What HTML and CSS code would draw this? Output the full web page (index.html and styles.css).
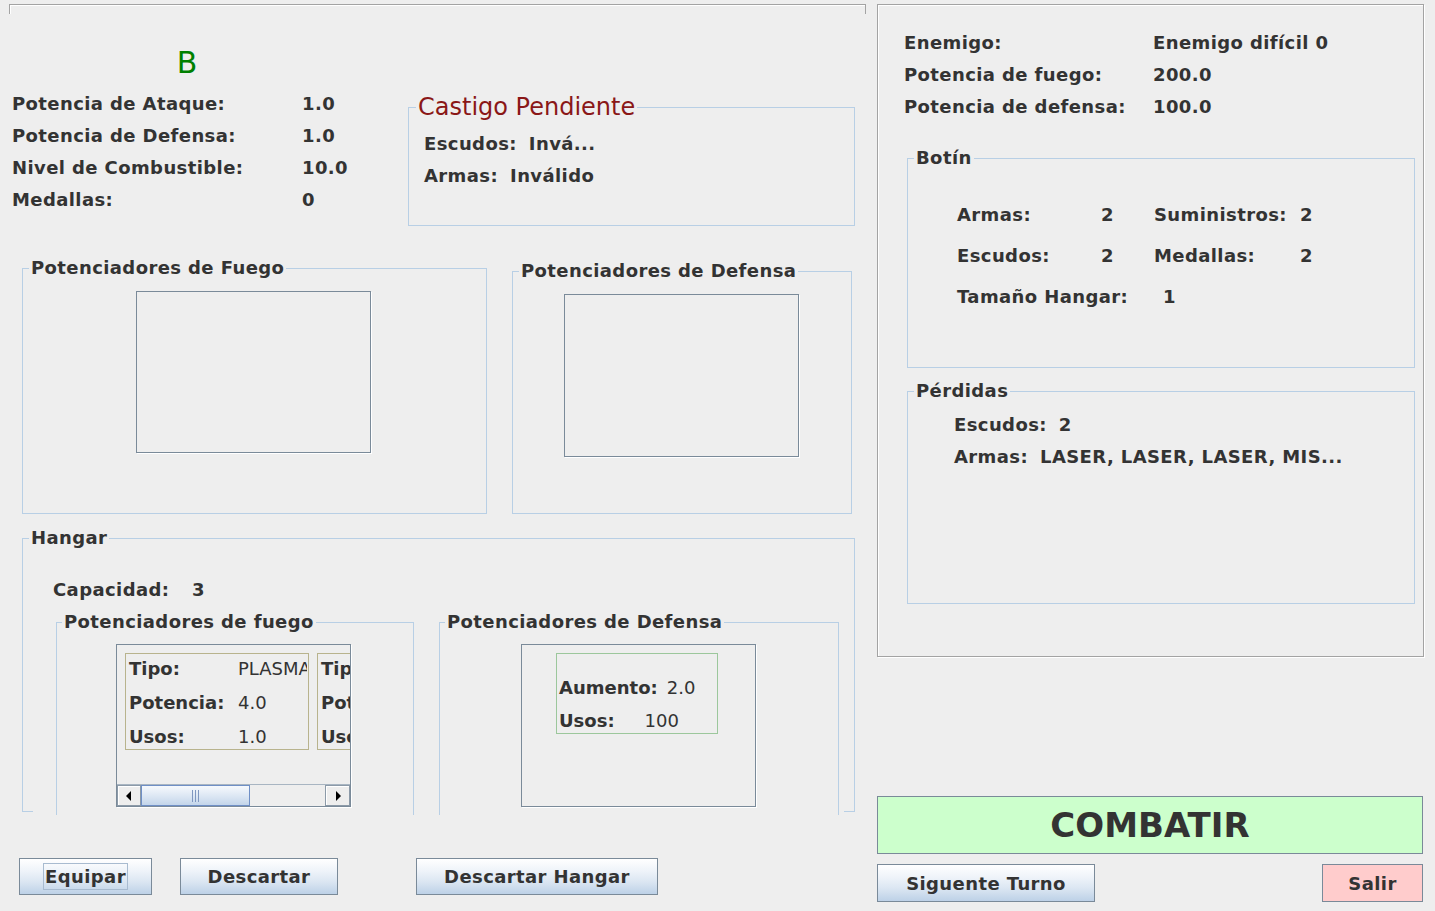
FILE: index.html
```html
<!DOCTYPE html>
<html lang="es">
<head>
<meta charset="utf-8">
<title>Partida</title>
<link rel="stylesheet" href="styles.css">
</head>
<body>
<div class="app">
  <div class="left">
    <div class="strip"></div>

    <div class="header">
      <div class="player">
        <div class="name">B</div>
        <div class="stats">
          <span>Potencia de Ataque:</span><span>1.0</span>
          <span>Potencia de Defensa:</span><span>1.0</span>
          <span>Nivel de Combustible:</span><span>10.0</span>
          <span>Medallas:</span><span>0</span>
        </div>
      </div>
      <fieldset class="box castigo">
        <legend>Castigo Pendiente</legend>
        <div class="castigo-body">
          <div class="pair"><span>Escudos:</span><span>Invá...</span></div>
          <div class="pair"><span>Armas:</span><span>Inválido</span></div>
        </div>
      </fieldset>
    </div>

    <div class="boosters">
      <fieldset class="box fire">
        <legend>Potenciadores de Fuego</legend>
        <div class="list-empty fire-list"></div>
      </fieldset>
      <fieldset class="box def">
        <legend>Potenciadores de Defensa</legend>
        <div class="list-empty def-list"></div>
      </fieldset>
    </div>

    <fieldset class="box hangar">
      <legend>Hangar</legend>
      <div class="hangar-body">
        <div class="cap"><span class="cap-label">Capacidad:</span><span>3</span></div>
        <div class="hangar-row">
          <fieldset class="box h-fire">
            <legend>Potenciadores de fuego</legend>
            <div class="scroll">
              <div class="viewport">
                <div class="card weapon">
                  <span class="lbl">Tipo:</span><span class="val">PLASMA</span>
                  <span class="lbl">Potencia:</span><span class="val">4.0</span>
                  <span class="lbl">Usos:</span><span class="val">1.0</span>
                </div>
                <div class="card weapon">
                  <span class="lbl">Tipo:</span><span class="val">LASER</span>
                  <span class="lbl">Potencia:</span><span class="val">2.0</span>
                  <span class="lbl">Usos:</span><span class="val">1.0</span>
                </div>
              </div>
              <div class="hbar">
                <div class="arrow arrow-left"></div>
                <div class="thumb"><span class="grip"></span></div>
                <div class="track"></div>
                <div class="arrow arrow-right"></div>
              </div>
            </div>
          </fieldset>
          <fieldset class="box h-def">
            <legend>Potenciadores de Defensa</legend>
            <div class="pane">
              <div class="card shield">
                <div class="srow"><span class="lbl">Aumento:</span><span class="val v-a">2.0</span></div>
                <div class="srow"><span class="lbl">Usos:</span><span class="val v-b">100</span></div>
              </div>
            </div>
          </fieldset>
        </div>
      </div>
    </fieldset>

    <div class="actions">
      <button class="btn equip"><span class="focus">Equipar</span></button>
      <button class="btn discard">Descartar</button>
      <button class="btn discard-hangar">Descartar Hangar</button>
    </div>
  </div>

  <div class="right">
    <div class="enemy-panel">
      <div class="enemy">
        <span>Enemigo:</span><span>Enemigo difícil 0</span>
        <span>Potencia de fuego:</span><span>200.0</span>
        <span>Potencia de defensa:</span><span>100.0</span>
      </div>
      <fieldset class="box botin">
        <legend>Botín</legend>
        <div class="loot">
          <span>Armas:</span><span>2</span><span>Suministros:</span><span>2</span>
          <span>Escudos:</span><span>2</span><span>Medallas:</span><span>2</span>
          <span class="span2">Tamaño Hangar:</span><span class="hval">1</span>
        </div>
      </fieldset>
      <fieldset class="box perdidas">
        <legend>Pérdidas</legend>
        <div class="perdidas-body">
          <div class="pair"><span>Escudos:</span><span>2</span></div>
          <div class="pair"><span>Armas:</span><span>LASER, LASER, LASER, MIS...</span></div>
        </div>
      </fieldset>
    </div>
    <button class="combat">COMBATIR</button>
    <div class="turn-row">
      <button class="btn next">Siguente Turno</button>
      <button class="btn quit">Salir</button>
    </div>
  </div>
</div>
</body>
</html>
```
FILE: styles.css
```css
* { box-sizing: border-box; }

html, body {
  margin: 0;
  padding: 0;
  background: #eeeeee;
}

body {
  width: 1435px;
  height: 911px;
  overflow: hidden;
  font-family: "DejaVu Sans", "Liberation Sans", sans-serif;
  font-weight: bold;
  font-size: 18px;
  letter-spacing: 0.4px;
  color: #333333;
}

.app {
  display: flex;
  align-items: flex-start;
}

/* ---------- generic titled box (Swing TitledBorder) ---------- */
.box {
  margin: 0;
  padding: 0;
  min-width: 0;
  border: 1px solid #b8cfe5;
}

.box > legend {
  padding: 0 2px;
  margin-left: 6px;
  line-height: 20px;
  white-space: nowrap;
}

/* ---------- left column ---------- */
.left {
  width: 877px;
  display: flex;
  flex-direction: column;
}

.strip {
  margin: 4px 0 0 9px;
  width: 857px;
  height: 10px;
  border: 1px solid #a3a3a3;
  border-bottom: none;
  box-shadow: inset 1px 1px 0 #ffffff;
}

.header {
  display: flex;
  align-items: flex-start;
  height: 244px;
}

.player {
  margin-left: 12px;
  width: 350px;
  padding-top: 31px;
}

.name {
  text-align: center;
  font-weight: normal;
  font-size: 30px;
  line-height: 36px;
  color: #008000;
  letter-spacing: 0;
  margin-bottom: 7px;
}

.stats {
  display: grid;
  grid-template-columns: 290px auto;
  grid-auto-rows: 32px;
  line-height: 32px;
}

.castigo {
  margin-left: 46px;
  margin-top: 81px;
  width: 447px;
  height: 131px;
}

.castigo > legend {
  font-weight: normal;
  font-size: 24px;
  line-height: 24px;
  letter-spacing: 0;
  color: #8a1717;
  margin-left: 7px;
}

.castigo-body {
  padding: 9px 0 0 15px;
}

.pair {
  display: flex;
  gap: 12px;
  line-height: 32px;
  white-space: nowrap;
}

.boosters {
  display: flex;
  align-items: flex-start;
}

.fire {
  margin-left: 22px;
  width: 465px;
  height: 256px;
}

.def {
  margin-left: 25px;
  margin-top: 3px;
  width: 340px;
  height: 253px;
}

.list-empty {
  width: 235px;
  height: 162px;
  border: 1px solid #7a8a99;
  box-shadow: 1px 1px 0 #ffffff;
  margin-top: 13px;
}

.fire-list { margin-left: 113px; }
.def-list { margin-left: 51px; height: 163px; }

/* ---------- hangar ---------- */
.hangar {
  margin: 14px 0 0 22px;
  width: 833px;
  height: 284px;
  overflow: visible;
}

.hangar-body {
  margin: 0 10px;
  height: 267px;
  overflow: hidden;
  background: #eeeeee;
  padding-top: 26px;
}

.cap {
  display: flex;
  line-height: 32px;
  padding-left: 20px;
}

.cap-label { width: 139px; }

.hangar-row {
  display: flex;
  align-items: flex-start;
  margin-top: 6px;
}

.h-fire {
  margin-left: 23px;
  width: 358px;
  height: 230px;
}

.h-def {
  margin-left: 25px;
  width: 400px;
  height: 230px;
}

.h-fire > legend, .h-def > legend { margin-left: 5px; }

.scroll {
  margin: 12px 0 0 59px;
  width: 235px;
  height: 163px;
  border: 1px solid #7a8a99;
  box-shadow: 1px 1px 0 #ffffff;
  display: flex;
  flex-direction: column;
}

.viewport {
  height: 139px;
  overflow: hidden;
  display: flex;
  gap: 8px;
  padding: 8px 0 0 8px;
}

.card {
  flex: none;
  overflow: hidden;
  white-space: nowrap;
}

.weapon {
  width: 184px;
  height: 97px;
  border: 1px solid #b8b38d;
  padding-left: 3px;
  display: grid;
  grid-template-columns: 109px 69px;
  grid-auto-rows: 34px;
  line-height: 30px;
  letter-spacing: 0;
}

.val {
  font-weight: normal;
  overflow: hidden;
  letter-spacing: 0;
}

.hbar {
  height: 22px;
  display: flex;
  border-top: 1px solid #a8b5c2;
}

.arrow {
  width: 24px;
  height: 21px;
  background: #eeeeee;
  border: 1px solid #8c9aa8;
  box-shadow: inset 1px 1px 0 #ffffff;
  position: relative;
  flex: none;
}

.arrow-right { width: 25px; }

.arrow::after {
  content: "";
  position: absolute;
  top: 5px;
  border-top: 5px solid transparent;
  border-bottom: 5px solid transparent;
}

.arrow-left::after { left: 8px; border-right: 5px solid #000; }
.arrow-right::after { left: 10px; border-left: 5px solid #000; }

.thumb {
  width: 109px;
  height: 21px;
  flex: none;
  border: 1px solid #6f8fc6;
  background: linear-gradient(#f6f9fd, #dbe6f3 55%, #c3d5ea);
  display: flex;
  align-items: center;
  justify-content: center;
}

.grip {
  width: 7px;
  height: 12px;
  background: repeating-linear-gradient(90deg, #7f97c0 0 1px, transparent 1px 3px);
}

.track {
  flex: 1;
  height: 21px;
  background: #eeeeee;
}

.pane {
  margin: 12px 0 0 81px;
  width: 235px;
  height: 163px;
  border: 1px solid #7a8a99;
  box-shadow: 1px 1px 0 #ffffff;
  padding-top: 8px;
}

.shield {
  width: 162px;
  height: 81px;
  margin-left: 34px;
  border: 1px solid #9cc79c;
  padding: 17px 0 0 2px;
  letter-spacing: 0;
}

.srow {
  display: flex;
  line-height: 33px;
  height: 33px;
}

.v-a { margin-left: 9px; }
.v-b { margin-left: 30px; }

/* ---------- buttons ---------- */
button {
  font: inherit;
  color: inherit;
  letter-spacing: inherit;
  margin: 0;
  padding: 0;
  cursor: default;
}

.btn {
  height: 37px;
  border: 1px solid #7a8a99;
  background: linear-gradient(#ffffff, #eef3f9 35%, #dbe6f2 65%, #bdd1e7);
  display: flex;
  align-items: center;
  justify-content: center;
  white-space: nowrap;
  flex: none;
}

.actions {
  display: flex;
  margin-top: 46px;
  padding-left: 19px;
}

.equip { width: 133px; }
.discard { width: 158px; margin-left: 28px; }
.discard-hangar { width: 242px; margin-left: 78px; }

.focus {
  outline: 1px solid #a8bbd0;
  padding: 1px 1px;
  line-height: 23px;
}

/* ---------- right column ---------- */
.right {
  width: 547px;
  margin-top: 4px;
  display: flex;
  flex-direction: column;
}

.enemy-panel {
  height: 653px;
  border: 1px solid #a3a3a3;
  box-shadow: inset 1px 1px 0 #ffffff, 1px 1px 0 #ffffff;
  padding-top: 22px;
}

.enemy {
  display: grid;
  grid-template-columns: 249px auto;
  grid-auto-rows: 32px;
  line-height: 32px;
  padding-left: 26px;
}

.botin {
  margin: 25px 0 0 29px;
  width: 508px;
  height: 220px;
}

.loot {
  display: grid;
  grid-template-columns: 144px 53px 146px auto;
  grid-auto-rows: 41px;
  line-height: 41px;
  padding: 26px 0 0 49px;
}

.span2 { grid-column: 1 / span 2; }
.hval { padding-left: 9px; }

.perdidas {
  margin: 13px 0 0 29px;
  width: 508px;
  height: 223px;
}

.perdidas-body {
  padding: 8px 0 0 46px;
}

.combat {
  margin-top: 139px;
  width: 546px;
  height: 58px;
  border: 1px solid #7a8a99;
  background: #ccffcc;
  font-size: 34px;
  letter-spacing: 0;
}

.turn-row {
  display: flex;
  justify-content: space-between;
  width: 546px;
  margin-top: 10px;
}

.next { width: 218px; height: 38px; }
.quit { width: 101px; height: 38px; background: #ffcccc; }
```
